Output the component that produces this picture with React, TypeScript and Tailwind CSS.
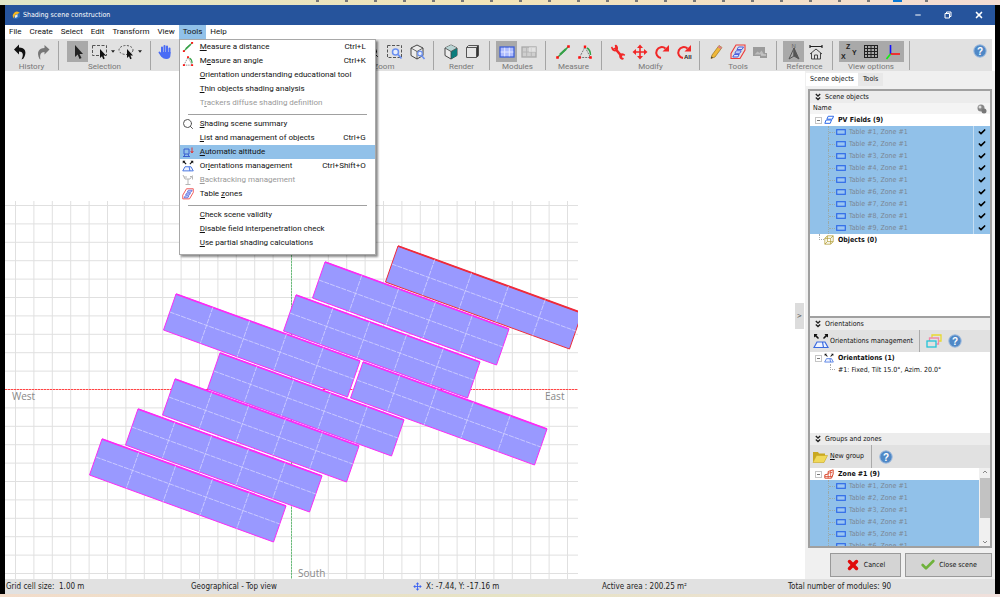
import React from 'react';
import { X, Minus, Check, Search } from 'lucide-react';

type IconProps = { className?: string };

interface MenuRow {
  label: string;
  mnemonic?: number;
  shortcut?: string;
  icon?: React.ReactNode;
  disabled?: boolean;
  active?: boolean;
}

/* ---------- icons ---------- */

const UndoIcon = () => (
  <svg viewBox="0 0 16 16" className="w-4 h-4">
    <path d="M1 5.500 6 .5v3c6 0 8.500 4.500 4.500 11l-2 1c2.500-5 1.500-8-2.500-8v3z" fill="#111" />
  </svg>
);

const RedoIcon = () => (
  <svg viewBox="0 0 16 16" className="w-4 h-4">
    <path d="M14.500 5.500 9.500 1v3C4 4 1 8 4.500 15l1 .5C4.500 11 5.500 8 9.500 8v2.500z" fill="#777" />
  </svg>
);

const CursorIcon = () => (
  <svg viewBox="0 0 16 16" className="w-4 h-4">
    <path d="M5 1v12l2.700-2.500L9.500 15l2-1-2-4H13z" fill="#222" />
  </svg>
);

const SelectIcon = ({ round }: { round?: boolean }) => (
  <svg viewBox="0 0 18 18" className="w-[18px] h-[18px]">
    {round ? (
      <ellipse cx="8" cy="7" rx="7" ry="4.500" fill="none" stroke="#555" strokeDasharray="2 1.500" />
    ) : (
      <rect x="1.500" y="2.500" width="14" height="10" fill="none" stroke="#555" strokeDasharray="3 1.500" />
    )}
    <path d="M9 6v9l2-1.800 1.200 3 1.500-.7-1.300-3H15z" fill="#111" />
  </svg>
);

const HandIcon = () => (
  <svg viewBox="0 0 16 16" className="w-4 h-4">
    <g stroke="#4a6cf5" strokeWidth="2" strokeLinecap="round" fill="none">
      <path d="M5 9V3.500M7.500 8V2M10 8V2.500M12.500 9V4.500M2.500 8.500 5 12" />
    </g>
    <path d="M4 8h9.500v3c0 2.500-1.500 4-4 4S5 14 3.500 11z" fill="#4a6cf5" />
  </svg>
);

const ZoomWindowIcon = () => (
  <svg viewBox="0 0 18 18" className="w-[18px] h-[18px]">
    <rect x="1.500" y="2.500" width="14" height="12" fill="none" stroke="#555" strokeDasharray="3 1.500" />
    <circle cx="9.500" cy="9" r="3" fill="#e8eefc" stroke="#6b90f0" strokeWidth="1.500" />
    <path d="m12 11.500 3.500 4" stroke="#6b90f0" strokeWidth="1.800" />
  </svg>
);

const CubeIcon = ({ shaded }: { shaded?: boolean }) => (
  <svg viewBox="0 0 18 18" className="w-[18px] h-[18px]">
    <path d="M9 2 15 5v7.500L9 16l-6-3.500V5z" fill="#ececec" stroke="#444" />
    {shaded && <path d="M9 8.500 15 5v7.500L9 16z" fill="#0c7d7d" />}
    {shaded && <path d="M3 5 9 2l6 3-6 3.500z" fill="#b9d4d4" />}
    <path d="m3 5 6 3.500L15 5M9 8.500V16" fill="none" stroke="#444" strokeWidth=".8" />
    {!shaded && (
      <g stroke="#6b90f0" fill="#e8eefc">
        <circle cx="12" cy="10.500" r="2.300" strokeWidth="1.200" />
        <path d="m13.500 12.500 3 3.500" strokeWidth="1.600" />
      </g>
    )}
  </svg>
);

const WireIcon = () => (
  <svg viewBox="0 0 18 18" className="w-[18px] h-[18px]">
    <path d="M2.500 4.500h10v10h-10zM12.500 4.500l2-2v10l-2 2M2.500 4.500l2-2h10" fill="#e6e6e6" stroke="#555" />
    <path d="M13.500 3.500v10" stroke="#333" strokeWidth="1.500" />
  </svg>
);

const ModulesIcon = ({ muted }: { muted?: boolean }) => (
  <svg viewBox="0 0 16 16" className="w-4 h-4">
    <rect x="1" y="3" width="14" height="10" fill={muted ? '#cfcfcf' : '#aebcff'} stroke={muted ? '#a8a8a8' : '#3d5fd8'} strokeWidth="1.300" />
    <path d="M5.700 3.700v8.600M10.300 3.700v8.600M1.700 8h12.600" stroke={muted ? '#b4b4b4' : '#e4e9ff'} />
    {muted && <path d="M8 3h7v5H8z" fill="#fff" opacity=".4" />}
  </svg>
);

const DistanceIcon = ({ className = 'w-4 h-4' }: IconProps) => (
  <svg viewBox="0 0 16 16" className={className}>
    <path d="M2.500 13.500 13.500 2.500" stroke="#35a047" strokeWidth="1.400" />
    <path d="M5 10.500 11 5" stroke="#35a047" strokeWidth="2.200" />
    <path d="M1.200 12.200h2.600v2.600H1.200zM12.200 1.200h2.600v2.600h-2.600z" fill="#f11" />
  </svg>
);

const AngleIcon = ({ className = 'w-4 h-4' }: IconProps) => (
  <svg viewBox="0 0 16 16" className={className}>
    <path d="M2.500 13.500 8 3l5.500 10.500z" fill="none" stroke="#777" strokeDasharray="2 1" />
    <path d="M10 4c2.500 1.500 3.500 4 3.500 7" fill="none" stroke="#35a047" strokeWidth="1.500" />
    <path d="M1.200 12.200h2.600v2.600H1.200zM12.200 12.200h2.600v2.600h-2.600zM6.800 1.500h2.400v2.400H6.800z" fill="#f11" />
  </svg>
);

const WrenchIcon = () => (
  <svg viewBox="0 0 16 16" className="w-4 h-4">
    <path d="m5.500 5 5.500 6.500" stroke="#f12727" strokeWidth="2.600" />
    <path d="M5.500 1 6 4 3 5.500 1.500 3M13.500 15 11 13.500l1-3 3 .5M1.800 3.500c.5 3 3 4 4.700 2.500S7 2 5.500 1.200M14.500 11.500c-1-2-4-2-4.500 0s1 3.500 3 3.500" fill="none" stroke="#f12727" strokeWidth="1.500" />
  </svg>
);

const MoveIcon = ({ className = 'w-4 h-4 text-[#f12727]' }: IconProps) => (
  <svg viewBox="0 0 16 16" className={className}>
    <path d="M8 3v10M3 8h10" stroke="currentColor" strokeWidth="1.600" />
    <path d="m8 .5 3 3.500H5zM8 15.500 5 12h6zM.5 8 4 5v6zM15.500 8 12 11V5z" fill="currentColor" />
  </svg>
);

const RotateIcon = ({ all }: { all?: boolean }) => (
  <svg viewBox="0 0 16 16" className="w-4 h-4">
    <path d="M11.500 4.500A5.500 5.500 0 1 0 7 14" fill="none" stroke="#f12727" strokeWidth="2" />
    <path d="M15 1v6.500H8.500z" fill="#f12727" />
    {all && (
      <text x="8" y="15" fontSize="6" fontWeight="700" fontFamily="Liberation Sans, sans-serif" fill="#222">All</text>
    )}
  </svg>
);

const PencilIcon = () => (
  <svg viewBox="0 0 16 16" className="w-4 h-4">
    <path d="M3 14.500 4 11 11 1.500l3 2L7 13z" fill="#f0b93a" stroke="#9a7420" strokeWidth=".7" />
    <path d="m11 1.500 3 2-1.300 1.800-3-2z" fill="#d9808a" />
    <path d="m3 14.500.5-2 1.500 1z" fill="#333" />
  </svg>
);

const ZonesIcon = ({ className = 'w-4 h-4' }: IconProps) => (
  <svg viewBox="0 0 16 16" className={className}>
    <path d="M1 14.500V9.500L6 1h9v5l-5 8.500z" fill="none" stroke="#ee3b3b" strokeWidth="1.100" />
    <path d="m7 5.500 1.500-2.500h5L12 5.500zM4.800 9.300l1.400-2.500h5L9.800 9.300zM2.800 13l1.400-2.500h5L7.800 13z" fill="#dbe4ff" stroke="#3a4fd8" strokeWidth=".9" />
  </svg>
);

const PictureIcon = () => (
  <svg viewBox="0 0 16 16" className="w-4 h-4">
    <path d="M1 3h12v6h2v5H8v-2H1z" fill="#9b9b9b" />
    <path d="m2.500 10.500 3-3 2 1.500 2-2.500 2.500 4z" fill="#bdbdbd" />
    <path d="M9 11h5" stroke="#ddd" />
  </svg>
);

const NorthIcon = () => (
  <svg viewBox="0 0 16 18" className="w-4 h-[18px]">
    <text x="5.500" y="5" fontSize="6" fontFamily="Liberation Sans, sans-serif" fill="#666">N</text>
    <path d="M8 5v8L3 16z" fill="none" stroke="#555" />
    <path d="M8 5v8l5 3z" fill="#555" stroke="#555" />
  </svg>
);

const HouseIcon = () => (
  <svg viewBox="0 0 16 16" className="w-4 h-4">
    <path d="M2 2.500h12M2 1v3M14 1v3" stroke="#222" strokeWidth="1.200" />
    <path d="M2 10 8 5l6 5M3.500 9v6h9V9M6.500 15v-4h3v4" fill="none" stroke="#444" />
  </svg>
);

const XyzIcon = () => (
  <svg viewBox="0 0 18 18" className="w-[18px] h-[18px]" fontSize="7" fontWeight="700" fontFamily="Liberation Sans, sans-serif">
    <text x="6" y="6" fill="#222">Z</text>
    <text x="1" y="16" fill="#222">X</text>
    <text x="12" y="12" fill="#222">Y</text>
  </svg>
);

const GridIcon = () => (
  <svg viewBox="0 0 16 16" className="w-4 h-4">
    <path d="M1 1.500h14M1 4.500h14M1 7.500h14M1 10.500h14M1 13.500h14M1.500 1v13M4.500 1v13M8 1v13M11.500 1v13M14.500 1v13" stroke="#222" />
  </svg>
);

const AxesIcon = () => (
  <svg viewBox="0 0 16 16" className="w-4 h-4" fill="none" strokeWidth="1.600">
    <path d="M5.500 10V1" stroke="#11f" />
    <path d="M5.500 10H15" stroke="#f11" />
    <path d="m5.500 10-4 5" stroke="#1e1" />
  </svg>
);

const HelpIcon = () => (
  <svg viewBox="0 0 14 14" className="w-[14px] h-[14px]">
    <circle cx="7" cy="7" r="6.200" fill="#4f88c6" stroke="#9dbade" />
    <text x="7" y="10.500" textAnchor="middle" fontSize="10" fontWeight="700" fontFamily="Liberation Sans, sans-serif" fill="#fff">?</text>
  </svg>
);

const OrientIcon = ({ className = 'w-3 h-3' }: IconProps) => (
  <svg viewBox="0 0 16 16" className={className}>
    <path d="M1 14.500 4 9h8l3 5.500zM9.500 9l1 5.500" fill="#eef3ff" stroke="#3a6be0" strokeWidth="1.200" />
    <path d="M1 1h3.500L3.500 2.200 6 5 5 6 2.300 3.400 1 4.500zM15 1h-3.500l1 1.200L10 5l1 1 2.700-2.600L15 4.500z" fill="#111" />
  </svg>
);

const AltitudeIcon = () => (
  <svg viewBox="0 0 12 12" className="w-3 h-3">
    <path d="M1 10.500h7M2 8V3h5v5zM3 8l-1 2.500M6 8l1 2.500" fill="none" stroke="#3a5fd0" />
    <path d="M10 1.500v5M8.700 5 10 7l1.300-2" stroke="#e03333" fill="none" />
  </svg>
);

const BacktrackIcon = () => (
  <svg viewBox="0 0 12 12" className="w-3 h-3">
    <path d="m1 1 2 4h5l2.500-3.500M2 3h3M6 5v5M3.500 10.500h5M8 2.500h2.500v3" fill="none" stroke="#b5b5b5" />
  </svg>
);

const FieldsIcon = () => (
  <svg viewBox="0 0 12 12" className="w-[10px] h-[10px]">
    <path d="m3.500 5 1.500-3.500h6.500L10 5zM1 10l1.500-4H9L7.500 10z" fill="#fff" stroke="#2f6be8" strokeWidth="1.200" />
  </svg>
);

const TableIcon = () => (
  <svg viewBox="0 0 10 6" className="w-[10px] h-[6px]">
    <rect x=".7" y=".7" width="8.600" height="4.600" fill="#9cc6f2" stroke="#2f6be8" strokeWidth="1.200" />
  </svg>
);

const BoxIcon = () => (
  <svg viewBox="0 0 12 12" className="w-[10px] h-[10px]">
    <path d="M1 4h7v7H1zM4 1h7v7H4zM1 4l3-3M8 4l3-3M8 11l3-3M1 11l3-3" fill="none" stroke="#b09a2c" strokeWidth=".9" />
  </svg>
);

const ZoneIcon = () => (
  <svg viewBox="0 0 12 12" className="w-[10px] h-[10px]">
    <path d="M1 11V7l4-1V3l6-2v5L9 11z" fill="#fff" stroke="#d9472b" strokeWidth="1.200" />
    <path d="M1 9h9M5 6v5M5 5l5-1M8 2v8" stroke="#d9472b" strokeWidth=".9" />
  </svg>
);

const LayersIcon = () => (
  <svg viewBox="0 0 16 16" className="w-4 h-4" fill="none" strokeWidth="1.300">
    <path d="M6 5V2h9v6h-2" stroke="#e8d92f" />
    <path d="M3.500 8V5h9v6h-2" stroke="#f08aa8" />
    <rect x="1" y="8" width="9" height="6" stroke="#23c3d8" />
  </svg>
);

const FolderIcon = () => (
  <svg viewBox="0 0 16 14" className="w-4 h-[14px]">
    <path d="M1 12V2h5l1 1.500h6V6H5z" fill="#c9a820" />
    <path d="m1 12.500 3.500-7H15.500L12 12.500z" fill="#f0d95a" stroke="#c9a820" strokeWidth=".6" />
  </svg>
);

const SunLogo = () => (
  <svg viewBox="0 0 10 10" className="w-[10px] h-[10px]">
    <path d="M9 3A4 4 0 1 0 3 8.500L4.500 5z" fill="#f8b81e" />
    <path d="M4 5 9 3v4L6 9H3z" fill="#2b6fc0" />
    <path d="M4 5.500 6.500 4v3L4 8z" fill="#e8e8e8" />
  </svg>
);

const ChevronsIcon = () => (
  <svg viewBox="0 0 6 8" className="w-[6px] h-2">
    <path d="m.8 1 2.200 2 2.200-2M.8 4.500 3 6.500l2.200-2" fill="none" stroke="#222" strokeWidth="1.300" />
  </svg>
);

const ScrollArrow = ({ down }: { down?: boolean }) => (
  <svg viewBox="0 0 8 8" className="w-2 h-2" fill="none" stroke="#888">
    <path d={down ? 'm2 3 2 2 2-2' : 'm2 5 2-2 2 2'} />
  </svg>
);

const Caret = () => (
  <svg viewBox="0 0 5 3" className="w-[4px] h-[3px]">
    <path d="M0 0h5L2.500 3z" fill="#222" />
  </svg>
);

/* ---------- menu ---------- */

const menuGroups: MenuRow[][] = [
  [
    { label: 'Measure a distance', mnemonic: 0, shortcut: 'Ctrl+L', icon: <DistanceIcon className="w-3 h-3" /> },
    { label: 'Measure an angle', mnemonic: 1, shortcut: 'Ctrl+K', icon: <AngleIcon className="w-3 h-3" /> },
    { label: 'Orientation understanding educational tool', mnemonic: 0 },
    { label: 'Thin objects shading analysis', mnemonic: 0 },
    { label: 'Trackers diffuse shading definition', mnemonic: 1, disabled: true },
  ],
  [
    { label: 'Shading scene summary', mnemonic: 0, icon: <Search className="w-3 h-3 text-[#555]" /> },
    { label: 'List and management of objects', mnemonic: 0, shortcut: 'Ctrl+G' },
    { label: 'Automatic altitude', mnemonic: 0, icon: <AltitudeIcon />, active: true },
    { label: 'Orientations management', mnemonic: 2, shortcut: 'Ctrl+Shift+O', icon: <OrientIcon /> },
    { label: 'Backtracking management', mnemonic: 0, icon: <BacktrackIcon />, disabled: true },
    { label: 'Table zones', mnemonic: 6, icon: <ZonesIcon className="w-3 h-3" /> },
  ],
  [
    { label: 'Check scene validity', mnemonic: 0 },
    { label: 'Disable field interpenetration check', mnemonic: 0 },
    { label: 'Use partial shading calculations', mnemonic: 0 },
  ],
];

const Mnemonic = ({ text, at }: { text: string; at?: number }) =>
  at === undefined ? (
    <>{text}</>
  ) : (
    <span>
      {text.slice(0, at)}
      <span className="underline">{text[at]}</span>
      {text.slice(at + 1)}
    </span>
  );

const ToolsMenu = () => (
  <div className="absolute left-0 top-full z-10 w-[197px] bg-white border border-[#a8a8a8] shadow-[2px_2px_2px_rgba(0,0,0,0.45)] pb-1">
    {menuGroups.map((group, g) => (
      <div key={g} className={g > 0 ? 'pt-1' : ''}>
        {g > 0 && <hr className="mx-2 mb-[2px] border-[#a0a0a0]" />}
        {group.map((row) => (
          <button
            key={row.label}
            disabled={row.disabled}
            className={`flex w-full h-[14px] items-center pl-[2px] pr-[9px] text-left whitespace-nowrap ${row.active ? 'bg-[#91c1e9]' : ''} ${row.disabled ? 'text-[#999]' : 'text-[#111]'}`}
          >
            <span className="w-[18px] shrink-0">{row.icon}</span>
            <span className="flex-1"><Mnemonic text={row.label} at={row.mnemonic} /></span>
            <span>{row.shortcut}</span>
          </button>
        ))}
      </div>
    ))}
  </div>
);

const MenuBar = () => (
  <nav className="flex h-[14px] bg-white">
    {['File', 'Create', 'Select', 'Edit', 'Transform', 'View', 'Tools', 'Help'].map((name) => (
      <div key={name} className="relative flex">
        <button className={`px-1 leading-[14px] ${name === 'Tools' ? 'bg-[#91c1e9]' : ''}`}>{name}</button>
        {name === 'Tools' && <ToolsMenu />}
      </div>
    ))}
  </nav>
);

/* ---------- toolbar ---------- */

const ToolButton = ({ label, active, children }: { label: string; active?: boolean; children: React.ReactNode }) => (
  <button aria-label={label} className={`flex w-[21px] h-[21px] items-center justify-center ${active ? 'bg-[#a9a9a9]' : ''}`}>
    {children}
  </button>
);

const ToolGroup = ({ label, width, children }: { label: string; width: string; children: React.ReactNode }) => (
  <div className={`${width} shrink-0 flex flex-col items-center justify-between border-r border-[#a5a5a5]`}>
    <div className="flex items-center gap-px">{children}</div>
    <span className="text-[#777] leading-[9px]">{label}</span>
  </div>
);

const Toolbar = () => (
  <div className="flex h-8 bg-[#e1e1e1] pt-[2px] pb-px mr-[3px]">
    <ToolGroup label="History" width="w-[54px]">
      <ToolButton label="Undo"><UndoIcon /></ToolButton>
      <ToolButton label="Redo"><RedoIcon /></ToolButton>
    </ToolGroup>
    <ToolGroup label="Selection" width="w-[92px]">
      <ToolButton label="Select" active><CursorIcon /></ToolButton>
      <ToolButton label="Rectangle selection"><SelectIcon /></ToolButton>
      <Caret />
      <ToolButton label="Lasso selection"><SelectIcon round /></ToolButton>
      <Caret />
    </ToolGroup>
    <div className="w-[184px] shrink-0 pl-[3px]">
      <ToolButton label="Pan"><HandIcon /></ToolButton>
    </div>
    <ToolGroup label="Zoom" width="w-[99px]">
      <ToolButton label="Zoom in"><Search className="w-3 h-3" /></ToolButton>
      <ToolButton label="Zoom out"><Search className="w-3 h-3" /></ToolButton>
      <ToolButton label="Zoom window"><ZoomWindowIcon /></ToolButton>
      <ToolButton label="Zoom all"><CubeIcon /></ToolButton>
    </ToolGroup>
    <ToolGroup label="Render" width="w-[56px]">
      <ToolButton label="Shaded"><CubeIcon shaded /></ToolButton>
      <ToolButton label="Wireframe"><WireIcon /></ToolButton>
    </ToolGroup>
    <ToolGroup label="Modules" width="w-[56px]">
      <ToolButton label="Show modules" active><ModulesIcon /></ToolButton>
      <ToolButton label="Hide modules"><ModulesIcon muted /></ToolButton>
    </ToolGroup>
    <ToolGroup label="Measure" width="w-[56px]">
      <ToolButton label="Distance"><DistanceIcon /></ToolButton>
      <ToolButton label="Angle"><AngleIcon /></ToolButton>
    </ToolGroup>
    <ToolGroup label="Modify" width="w-[98px]">
      <ToolButton label="Edit"><WrenchIcon /></ToolButton>
      <ToolButton label="Move"><MoveIcon /></ToolButton>
      <ToolButton label="Rotate"><RotateIcon /></ToolButton>
      <ToolButton label="Rotate all"><RotateIcon all /></ToolButton>
    </ToolGroup>
    <ToolGroup label="Tools" width="w-[77px]">
      <ToolButton label="Draw"><PencilIcon /></ToolButton>
      <ToolButton label="Zones"><ZonesIcon /></ToolButton>
      <ToolButton label="Ground image"><PictureIcon /></ToolButton>
    </ToolGroup>
    <ToolGroup label="Reference" width="w-[56px]">
      <ToolButton label="North" active><NorthIcon /></ToolButton>
      <ToolButton label="Building"><HouseIcon /></ToolButton>
    </ToolGroup>
    <ToolGroup label="View options" width="w-[77px]">
      <div className="flex bg-[#a9a9a9] gap-px">
        <ToolButton label="Axis names"><XyzIcon /></ToolButton>
        <ToolButton label="Grid"><GridIcon /></ToolButton>
        <ToolButton label="Axes"><AxesIcon /></ToolButton>
      </div>
    </ToolGroup>
    <button aria-label="Help" className="ml-auto mr-[5px] mb-[10px]"><HelpIcon /></button>
  </div>
);

/* ---------- scene ---------- */

const CELL = 18.4;
const ORIGIN = { x: 286.5, y: 318.5 };

const panels = [
  { x: 97, y: 368 },
  { x: 133, y: 338 },
  { x: 170, y: 308 },
  { x: 215, y: 282 },
  { x: 171, y: 223 },
  { x: 358, y: 291 },
  { x: 291, y: 224 },
  { x: 320, y: 191 },
  { x: 393, y: 175, selected: true },
];

const Panel = ({ x, y, selected }: { x: number; y: number; selected?: boolean }) => {
  const edge = selected ? '#ee2b3b' : '#fb2bf5';
  return (
    <g transform={`translate(${x} ${y})`}>
      <path d="M0 0 184 67 171.500 103-12.500 36z" fill="#9999ff" stroke={edge} />
      <path d="M0 0 184 67" stroke={edge} strokeWidth="1.800" />
      <path
        d="M36.800 13.400 24.300 49.400M73.600 26.800 61.100 62.800M110.400 40.200 97.900 76.200M147.200 53.600 134.700 89.600M-6.200 18 177.800 85"
        stroke="#d4d4ff"
        strokeWidth=".8"
        strokeDasharray="5 1"
      />
    </g>
  );
};

const Scene = () => {
  const cols = Array.from({ length: 32 }, (_, i) => ORIGIN.x + (i - 15) * CELL).filter((x) => x !== ORIGIN.x);
  const rows = Array.from({ length: 21 }, (_, i) => ORIGIN.y + (i - 10) * CELL).filter((y) => y !== ORIGIN.y);
  return (
    <svg viewBox="0 0 573 508" className="w-[573px] h-[508px] shrink-0" fontFamily="Open Sans, sans-serif" fontSize="10">
      <g stroke="#e0e0e0">
        {cols.map((x) => <path key={x} d={`M${x} 130V508`} />)}
        {rows.map((y) => <path key={y} d={`M0 ${y}H573`} />)}
      </g>
      {/* axes: tinted base line with brighter dashes */}
      <path d="M286.500 130V508" stroke="#b5dcbc" />
      <path d="M286.500 130V508" stroke="#6cbb7c" strokeDasharray="2 1" />
      <path d="M0 318.500H573" stroke="#ffb0b0" />
      <path d="M0 318.500H573" stroke="#ff4545" strokeDasharray="2 1" />
      {panels.map((p) => <Panel key={`${p.x}-${p.y}`} {...p} />)}
      <g fill="#888">
        <text x="7" y="329">West</text>
        <text x="540" y="329">East</text>
        <text x="293" y="506">South</text>
      </g>
    </svg>
  );
};

/* ---------- side panel ---------- */

const Expander = () => (
  <span className="flex w-[7px] h-[7px] shrink-0 items-center justify-center border border-[#c5c5c5] bg-white">
    <span className="w-[3px] h-px bg-[#777]" />
  </span>
);

const TreeRoot = ({ icon, label }: { icon: React.ReactNode; label: string }) => (
  <span className="flex h-3 items-center gap-[2px] pl-[5px] font-bold">
    <Expander />
    {icon}
    <span className="ml-[2px]">{label}</span>
  </span>
);

const SectionHeader = ({ title }: { title: string }) => (
  <h2 className="flex h-3 shrink-0 items-center gap-1 pl-[5px] bg-[#ececec]">
    <ChevronsIcon />
    {title}
  </h2>
);

const TreeLeaf = ({ n }: { n: number }) => (
  <span className="flex h-3 items-center pl-[18px] text-[#7b8794]">
    <span className="h-full border-l border-dotted border-[#9aa]" />
    <span className="w-[6px] mr-px border-t border-dotted border-[#9aa]" />
    <TableIcon />
    <span className="ml-[3px]">{`Table #${n}, Zone #1`}</span>
  </span>
);

const SceneObjects = () => (
  <table className="w-full border-collapse bg-white">
    <thead>
      <tr className="h-[11px] bg-[#f4f4f4] text-left">
        <th className="p-0 pl-[3px] font-normal leading-[11px]">Name</th>
        <th className="w-[17px] p-0">
          <svg viewBox="0 0 10 10" className="w-[10px] h-[10px] mx-auto">
            <circle cx="4" cy="4" r="3.500" fill="#888" />
            <circle cx="3" cy="3" r="1.500" fill="#ddd" />
            <circle cx="7" cy="7" r="2.500" fill="#777" />
          </svg>
        </th>
      </tr>
    </thead>
    <tbody>
      <tr className="h-3">
        <td className="p-0" colSpan={2}><TreeRoot icon={<FieldsIcon />} label="PV Fields (9)" /></td>
      </tr>
      {[1, 2, 3, 4, 5, 6, 7, 8, 9].map((n) => (
        <tr key={n} className="h-3 bg-[#91c1e9]">
          <td className="p-0 border-r border-[#c5def3]"><TreeLeaf n={n} /></td>
          <td className="p-0"><Check className="w-2 h-2 mx-auto text-black" strokeWidth={5} /></td>
        </tr>
      ))}
      <tr className="h-3">
        <td className="p-0" colSpan={2}>
          <span className="flex h-3 items-center pl-[9px] font-bold">
            <span className="w-[5px] h-[6px] mb-[6px] border-l border-b border-dotted border-[#aaa]" />
            <BoxIcon />
            <span className="ml-1">Objects (0)</span>
          </span>
        </td>
      </tr>
    </tbody>
  </table>
);

const SidePanel = () => (
  <aside className="w-[190px] shrink-0 flex flex-col bg-[#f0f0f0] pl-px pr-[3px] pb-[2px] text-[7px]">
    <div className="flex pt-[2px]">
      <button className="h-[13px] px-1 bg-white leading-[13px]">Scene objects</button>
      <button className="h-[13px] px-[5px] bg-[#e8e8e8] leading-[13px]">Tools</button>
    </div>
    <div className="flex flex-1 flex-col mt-[3px] ml-[2px] border-2 border-[#a0a0a0]">
      <section className="bg-white flex-1 border-b-2 border-[#a0a0a0]">
        <SectionHeader title="Scene objects" />
        <SceneObjects />
      </section>
      <section className="flex flex-col h-[115px] bg-white">
        <SectionHeader title="Orientations" />
        <div className="flex h-[22px] shrink-0 items-center bg-[#e1e1e1] pl-[3px]">
          <button className="flex items-center gap-px"><OrientIcon className="w-4 h-4" />Orientations management</button>
          <span className="w-px h-full mx-[6px] bg-[#aaa]" />
          <button aria-label="Arrange"><LayersIcon /></button>
          <button aria-label="Orientation help" className="ml-[6px]"><HelpIcon /></button>
        </div>
        <TreeRoot icon={<OrientIcon className="w-[10px] h-[10px]" />} label="Orientations (1)" />
        <div className="flex h-3 items-center pl-5">
          <span className="w-[5px] h-[6px] mr-[3px] mb-[6px] border-l border-b border-dotted border-[#aaa]" />
          #1: Fixed, Tilt 15.0°, Azim. 20.0°
        </div>
      </section>
      <section className="flex flex-col h-[113px] bg-white">
        <SectionHeader title="Groups and zones" />
        <div className="flex h-[23px] shrink-0 items-center bg-[#e1e1e1] pl-[2px]">
          <button className="flex items-center gap-[2px]"><FolderIcon /><Mnemonic text="New group" at={0} /></button>
          <span className="w-px h-full mx-[7px] bg-[#aaa]" />
          <button aria-label="Group help"><HelpIcon /></button>
        </div>
        <div className="flex flex-1 min-h-0">
          <div className="flex-1 overflow-hidden">
            <TreeRoot icon={<ZoneIcon />} label="Zone #1 (9)" />
            <div className="bg-[#91c1e9]">
              {[1, 2, 3, 4, 5, 6].map((n) => <TreeLeaf key={n} n={n} />)}
            </div>
          </div>
          <div className="flex w-[11px] flex-col items-center justify-between bg-[#f0f0f0]">
            <ScrollArrow />
            <span className="w-[10px] h-10 mb-auto mt-[2px] bg-[#c2c2c2]" />
            <ScrollArrow down />
          </div>
        </div>
      </section>
    </div>
    <div className="flex h-6 mt-[5px] justify-end gap-1">
      <button className="flex w-[71px] items-center justify-center gap-1 border border-[#999] bg-[#d4d4d4]">
        <X className="w-[14px] h-[14px] text-[#e00b0b]" strokeWidth={6} />
        Cancel
      </button>
      <button className="flex w-[87px] items-center justify-center gap-[3px] border border-[#999] bg-[#d4d4d4]">
        <Check className="w-4 h-4 text-[#6fb23c]" strokeWidth={4} />
        Close scene
      </button>
    </div>
  </aside>
);

const StatusBar = () => (
  <footer className="flex h-[15px] items-center bg-[#e1e1e1] text-[#222] text-[8px]">
    <span className="w-[186px] pl-px">Grid cell size:&nbsp; 1.00 m</span>
    <span className="w-[222px]">Geographical - Top view</span>
    <span className="flex w-[189px] items-center gap-1"><MoveIcon className="w-[9px] h-[9px] text-[#3d63f2]" />X: -7.44, Y: -17.16 m</span>
    <span className="w-[186px]">Active area : 200.25 m²</span>
    <span>Total number of modules: 90</span>
  </footer>
);

const App: React.FC = () => {
  return (
    <div className="flex flex-col min-h-screen bg-black font-['DejaVu_Sans_Condensed',sans-serif] text-[7px] text-[#111] whitespace-nowrap">
      <div className="flex h-[5px] justify-end gap-[26px] pr-[72px] bg-linear-to-r from-[#dfe5c8] via-[#f2e4b8] to-[#f3dcd5]">
        {Array.from({ length: 22 }, (_, i) => (
          <span key={i} className={i === 20 ? 'w-[9px] -mx-[3px] h-[2px] bg-[#0a78d4]' : 'w-[3px] h-[2px] bg-[#777]'} />
        ))}
      </div>
      <div className="flex flex-1 flex-col ml-[5px] mr-[5px] bg-white">
        <header className="flex h-5 items-center bg-[#26549c] pl-[6px] text-white">
          <SunLogo />
          <h1 className="ml-[2px]">Shading scene construction</h1>
          <div className="flex ml-auto mr-[11px] items-center gap-[22px]">
            <button aria-label="Minimize"><Minus className="w-2 h-2" strokeWidth={3} /></button>
            <button aria-label="Restore">
              <svg viewBox="0 0 8 8" className="w-2 h-2"><path d="M1 2.500h4.500V7H1zM2.500 2.500V1H7v4.500H5.500" fill="none" stroke="#fff" /></svg>
            </button>
            <button aria-label="Close"><X className="w-[10px] h-[10px]" strokeWidth={4} /></button>
          </div>
        </header>
        <div className="font-['Roboto',sans-serif] text-[8px]">
          <MenuBar />
          <Toolbar />
        </div>
        <main className="flex flex-1">
          <div className="flex flex-1 min-w-0 overflow-hidden"><Scene /></div>
          <button aria-label="Collapse panel" className="self-center w-[9px] h-[26px] mb-[18px] mr-px bg-[#dcdcdc] text-[#555]">&gt;</button>
          <SidePanel />
        </main>
        <StatusBar />
      </div>
      <div className="h-[3px] bg-linear-to-r from-[#f2dccb] via-[#e6e3c4] to-[#f0e0dc]" />
    </div>
  );
};

export default App;
